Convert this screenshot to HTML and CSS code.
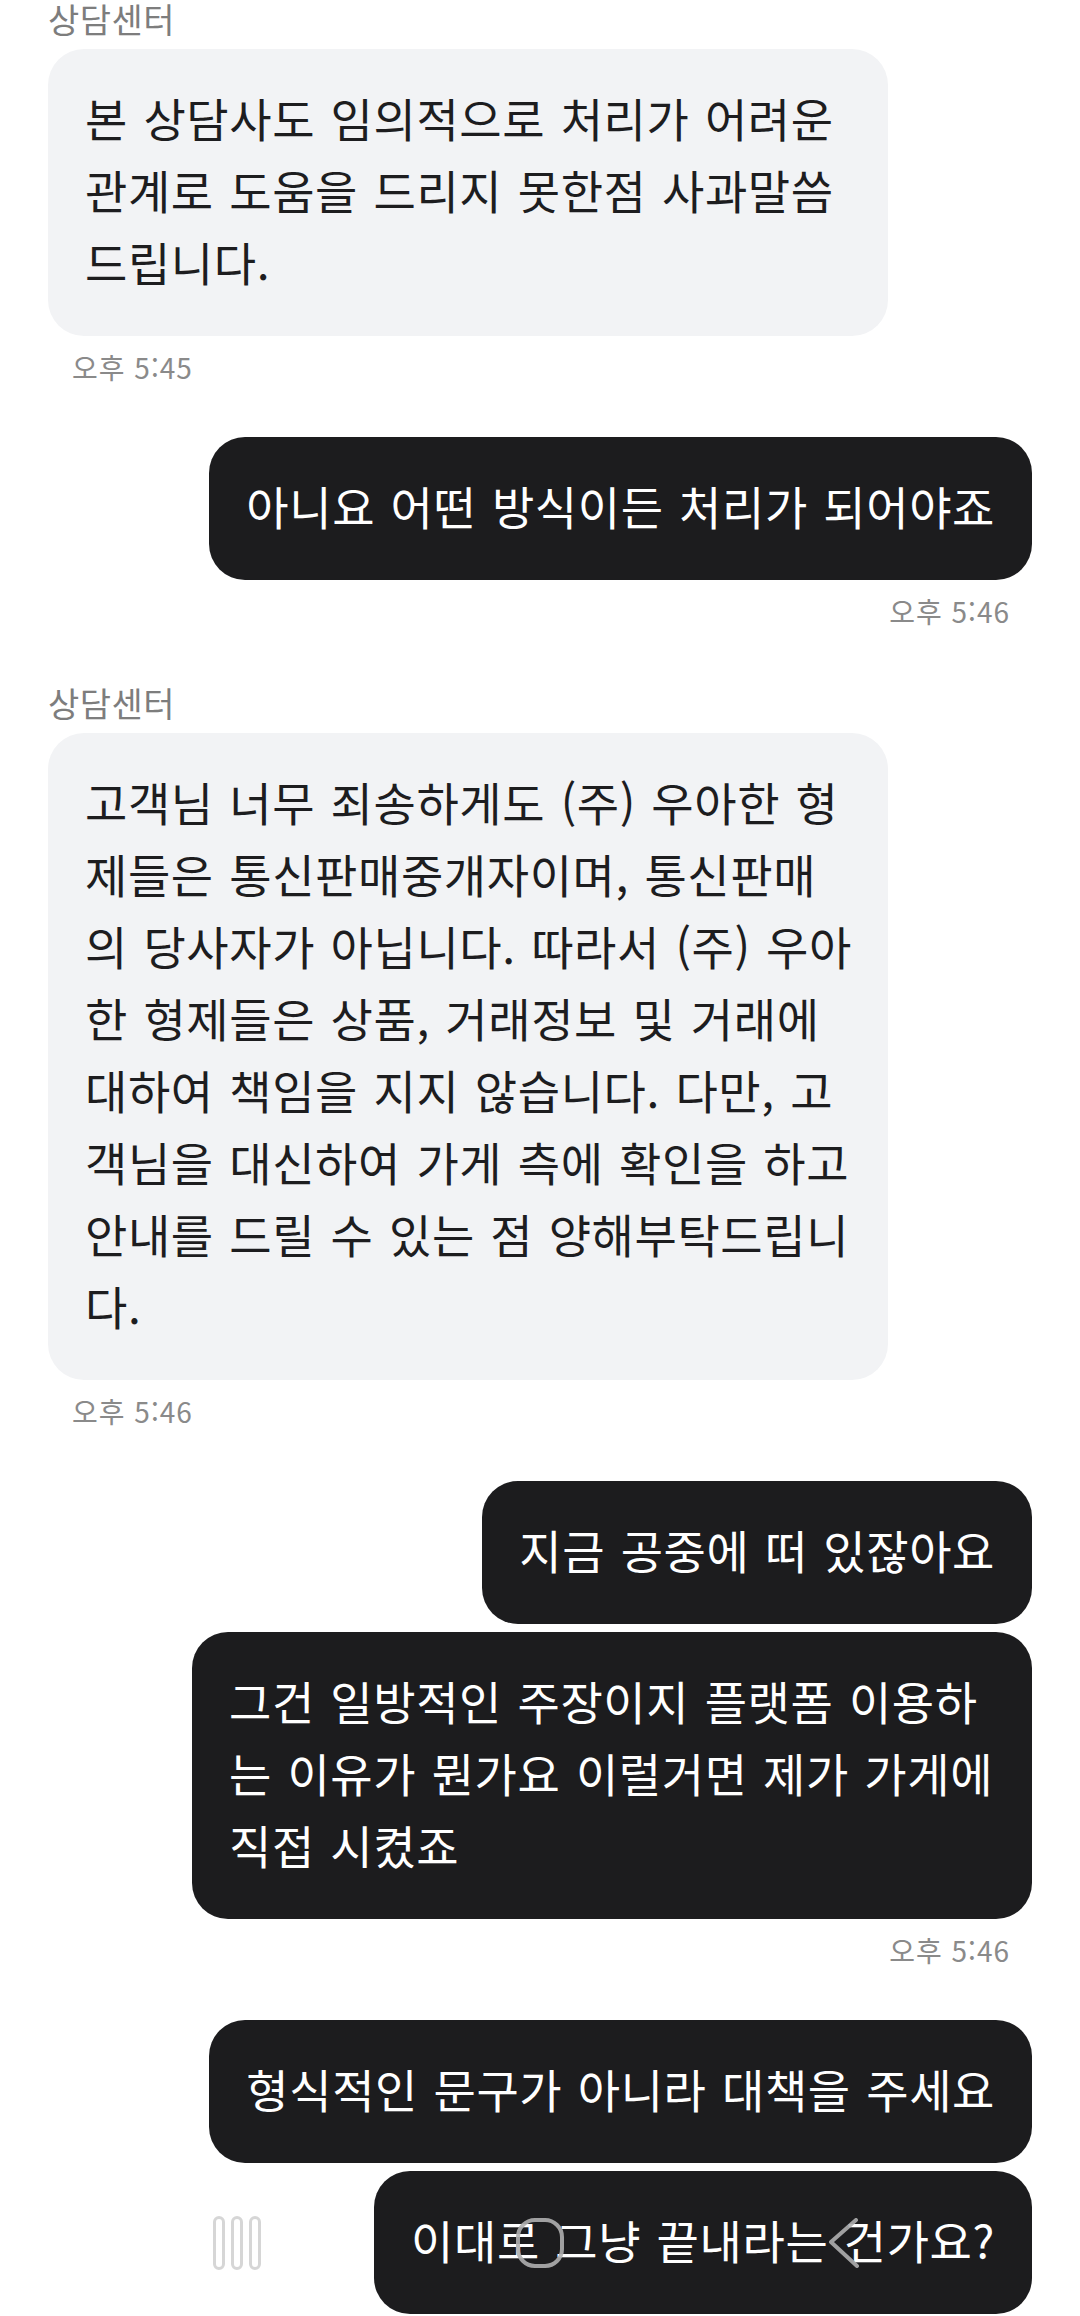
FILE: index.html
```html
<!DOCTYPE html>
<html lang="ko">
<head>
<meta charset="utf-8">
<title>상담센터</title>
<link rel="stylesheet" href="styles.css">
</head>
<body>
<main class="chat">
  <section class="group in first">
    <div class="sender">상담센터</div>
    <div class="bubble multi">본 상담사도 임의적으로 처리가 어려운<br>관계로 도움을 드리지 못한점 사과말씀<br>드립니다.</div>
    <div class="time">오후 5:45</div>
  </section>

  <section class="group out">
    <div class="bubble">아니요 어떤 방식이든 처리가 되어야죠</div>
    <div class="time">오후 5:46</div>
  </section>

  <section class="group in">
    <div class="sender">상담센터</div>
    <div class="bubble multi">고객님 너무 죄송하게도 (주) 우아한 형<br>제들은 통신판매중개자이며, 통신판매<br>의 당사자가 아닙니다. 따라서 (주) 우아<br>한 형제들은 상품, 거래정보 및 거래에<br>대하여 책임을 지지 않습니다. 다만, 고<br>객님을 대신하여 가게 측에 확인을 하고<br>안내를 드릴 수 있는 점 양해부탁드립니<br>다.</div>
    <div class="time">오후 5:46</div>
  </section>

  <section class="group out">
    <div class="bubble">지금 공중에 떠 있잖아요</div>
    <div class="bubble multi">그건 일방적인 주장이지 플랫폼 이용하<br>는 이유가 뭔가요 이럴거면 제가 가게에<br>직접 시켰죠</div>
    <div class="time">오후 5:46</div>
  </section>

  <section class="group out">
    <div class="bubble">형식적인 문구가 아니라 대책을 주세요</div>
    <div class="bubble">이대로 그냥 끝내라는 건가요?</div>
  </section>
</main>

<nav class="sysnav" aria-label="system navigation">
  <span class="navbtn">
    <svg width="48" height="54" viewBox="0 0 48 54">
      <rect x="1.5" y="1.5" width="9" height="51" rx="4.5" class="pill"/>
      <rect x="19.5" y="1.5" width="9" height="51" rx="4.5" class="pill"/>
      <rect x="37.5" y="1.5" width="9" height="51" rx="4.5" class="pill"/>
    </svg>
  </span>
  <span class="navbtn">
    <svg width="48" height="50" viewBox="0 0 48 50">
      <rect x="2" y="2" width="44" height="46" rx="17" class="home"/>
    </svg>
  </span>
  <span class="navbtn">
    <svg width="48" height="50" viewBox="0 0 48 50">
      <polyline points="37,2 12,24 38,48" class="back"/>
    </svg>
  </span>
</nav>
</body>
</html>
```

FILE: styles.css
```css
* {
  box-sizing: border-box;
}

html, body {
  margin: 0;
  padding: 0;
  background: #ffffff;
}

body {
  width: 1080px;
  height: 2316px;
  overflow: hidden;
  font-family: "Noto Sans CJK KR", "Noto Sans", sans-serif;
  color: #1d1d1f;
}

.chat {
  display: flex;
  flex-direction: column;
  padding: 0 48px;
}

.group {
  display: flex;
  flex-direction: column;
  margin-top: 52px;
}

.group.first {
  margin-top: -3px;
}

.group.in {
  align-items: flex-start;
}

.group.out {
  align-items: flex-end;
}

.sender {
  font-size: 34px;
  line-height: 44px;
  letter-spacing: 0.5px;
  color: #7d7d7d;
  margin-bottom: 8px;
}

.bubble {
  max-width: 840px;
  font-size: 46px;
  line-height: 72px;
  letter-spacing: 0.6px;
  word-spacing: 2px;
  white-space: nowrap;
  padding: 32px 37px 39px;
  border-radius: 36px;
}

.bubble + .bubble {
  margin-top: 8px;
}

.bubble.multi {
  width: 840px;
}

.in .bubble {
  background: #f2f3f5;
  color: #1d1d1f;
}

.out .bubble {
  background: #1c1c1e;
  color: #ffffff;
}

.time {
  margin-top: 13px;
  font-size: 28px;
  line-height: 36px;
  letter-spacing: 1px;
  color: #8a8a8a;
}

.in .time {
  padding-left: 24px;
}

.out .time {
  padding-right: 22px;
}

.sysnav {
  position: fixed;
  left: 0;
  right: 0;
  bottom: 0;
  height: 146px;
  display: flex;
  align-items: center;
  justify-content: center;
  gap: 255px;
  pointer-events: none;
}

.navbtn {
  display: flex;
  width: 48px;
  justify-content: center;
}

.pill {
  fill: rgba(255, 255, 255, 0.6);
  stroke: rgba(200, 200, 200, 0.75);
  stroke-width: 3;
}

.home {
  fill: none;
  stroke: rgba(175, 175, 175, 0.9);
  stroke-width: 4;
}

.back {
  fill: none;
  stroke: rgba(175, 175, 175, 0.9);
  stroke-width: 4;
  stroke-linecap: round;
  stroke-linejoin: round;
}
```
